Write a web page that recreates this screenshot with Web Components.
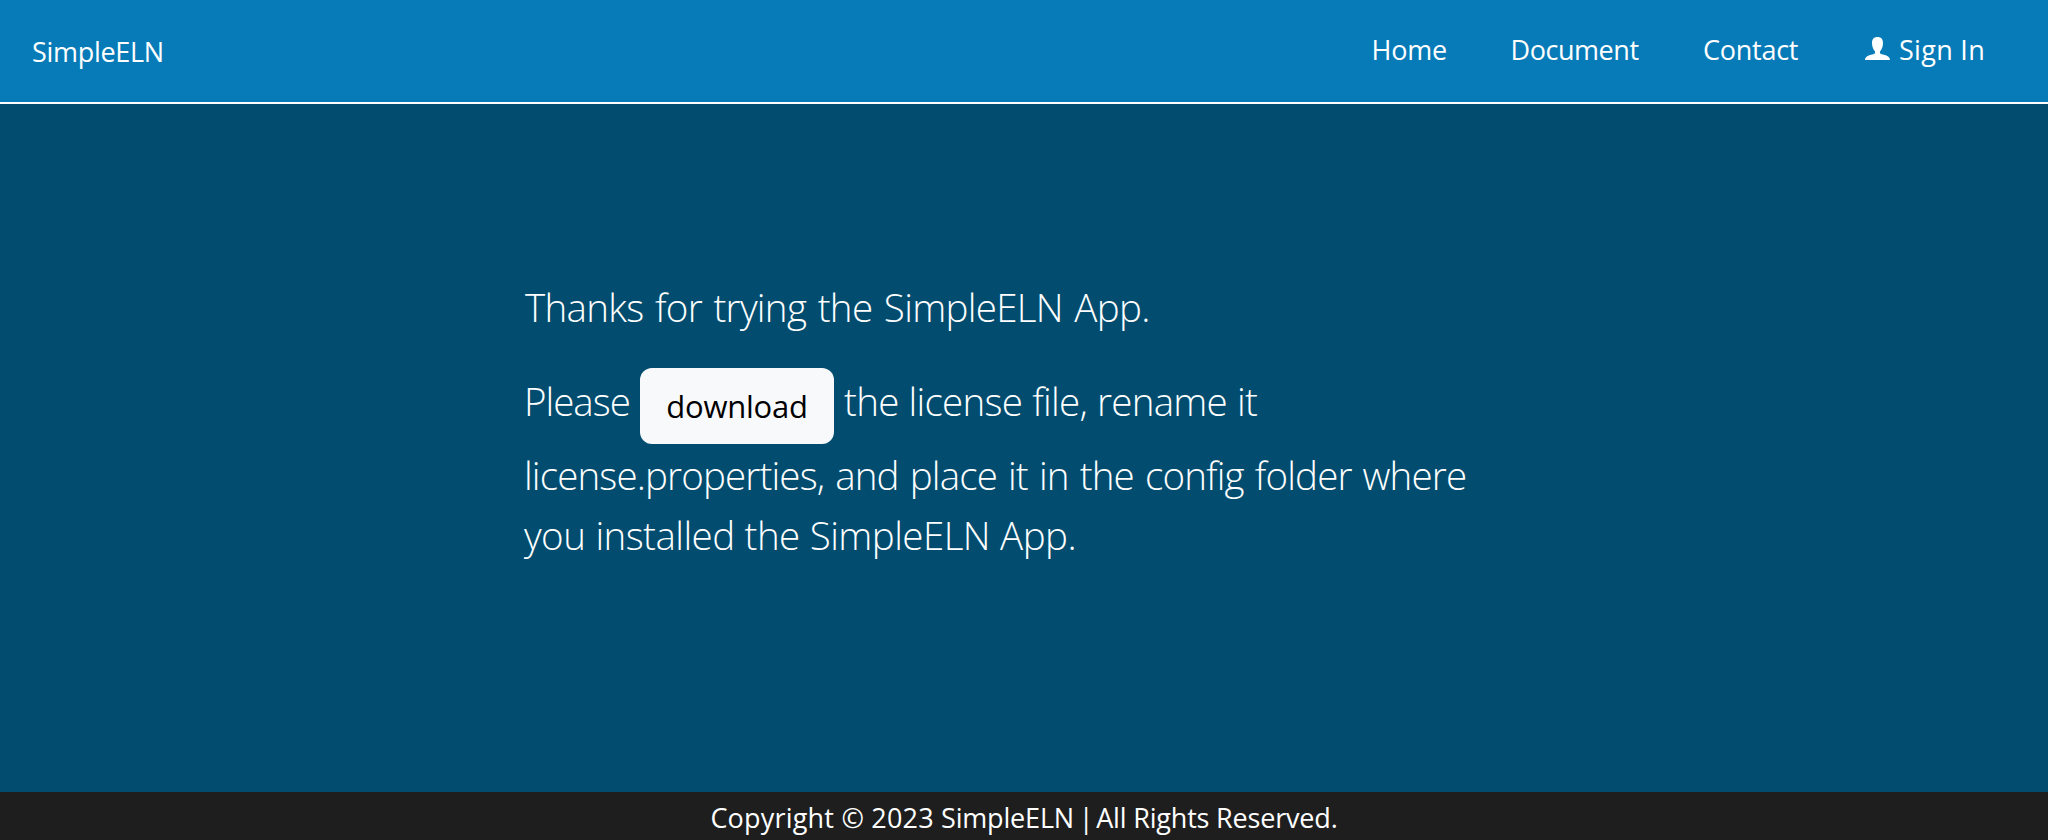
<!DOCTYPE html>
<html lang="en">
<head>
<meta charset="utf-8">
<title>SimpleELN</title>
<style>
html,body{margin:0;height:100%}
body{font-family:"Open Sans","Noto Sans",sans-serif;font-size:27px;color:#fff;background:#024d6f;overflow:hidden}
</style>
</head>
<body>
<eln-app></eln-app>
<script>
class Base extends HTMLElement{
  constructor(){super();this.attachShadow({mode:'open'}).innerHTML=this.constructor.html;}
}
customElements.define('eln-header',class extends Base{
  static html=`<style>
  :host{display:flex;align-items:center;justify-content:space-between;box-sizing:border-box;height:104px;background:#077bb8;border-bottom:2px solid #fff;padding:0 62px 0 32px}
  .brand{letter-spacing:-.3px;line-height:40px;padding-top:2px}
  nav{display:grid;grid-template-columns:139px 192.5px 162px 121px;line-height:40px;padding-bottom:2px}
  </style><div class="brand">SimpleELN</div><nav><slot></slot></nav>`;
});
customElements.define('eln-link',class extends Base{
  static html=`<style>
  :host{display:flex;white-space:nowrap}
  a{color:inherit;text-decoration:none}
  </style><slot name="icon"></slot><a><slot></slot></a>`;
});
customElements.define('eln-user-icon',class extends Base{
  static html=`<style>:host{display:block;width:25px;height:23px;margin:7px 9px 0 0}svg{display:block}</style>
  <svg width="25" height="23" viewBox="0 0 25 23" fill="#fff"><path d="M12.500 0C16 0 18 2 18 6c0 3.600-1.200 6.500-3 8.400v1.500c.3.900 1.400 1.200 3 1.600 4.300 1 7 2.500 7 5.500H0c0-3 2.700-4.500 7-5.500 1.600-.4 2.700-.7 3-1.600v-1.500C8.200 12.500 7 9.600 7 6c0-4 2-6 5.500-6z"/></svg>`;
});
customElements.define('eln-button',class extends Base{
  static html=`<style>
  :host{display:block}
  button{display:block;width:194px;height:76px;border:0;border-radius:12px;background:#f8f9fa;color:#000;font:400 31px/76px "Open Sans","Noto Sans",sans-serif;letter-spacing:-.22px;padding:0}
  </style><button><slot></slot></button>`;
});
customElements.define('eln-message',class extends Base{
  static html=`<style>
  :host{display:block;width:1000px;margin-left:524px;padding-top:173px;font-size:38.5px;font-weight:300;line-height:60px;white-space:nowrap}
  p{margin:0}
  .first{letter-spacing:-.7px;word-spacing:2.2px;margin:0 0 31px 1px}
  .row{display:flex;height:77px}
  .please{width:116px;letter-spacing:-1px;padding-top:3px;box-sizing:border-box}
  .rest{letter-spacing:-.72px;word-spacing:.7px;padding:3px 0 0 10px}
  .three{letter-spacing:-.85px;word-spacing:1.9px}
  .four{letter-spacing:-.55px;word-spacing:.6px}
  </style>
  <p class="first">Thanks for trying the SimpleELN App.</p>
  <div class="row"><span class="please">Please</span><eln-button>download</eln-button><span class="rest">the license file, rename it</span></div>
  <p class="three">license.properties, and place it in the config folder where</p>
  <p class="four">you installed the SimpleELN App.</p>`;
});
customElements.define('eln-footer',class extends Base{
  static html=`<style>
  :host{display:block;box-sizing:border-box;height:48px;padding-top:5px;background:#1e1e1e;text-align:center;line-height:41px;letter-spacing:-.185px}
  </style><slot></slot>`;
});
customElements.define('eln-app',class extends Base{
  static html=`<style>
  :host{display:grid;grid-template-rows:104px 1fr 48px;height:840px;background:#024d6f}
  .year{letter-spacing:.2px}
  .bar{letter-spacing:-2.2px}
  </style>
  <eln-header><eln-link style="letter-spacing:-.2px">Home</eln-link><eln-link style="letter-spacing:-.45px">Document</eln-link><eln-link style="letter-spacing:-.25px">Contact</eln-link><eln-link style="letter-spacing:.3px"><eln-user-icon slot="icon"></eln-user-icon>Sign In</eln-link></eln-header>
  <eln-message></eln-message>
  <eln-footer><span class="year">Copyright © 2023 </span>SimpleELN<span class="bar"> | </span>All Rights Reserved.</eln-footer>`;
});
</script>
</body>
</html>
